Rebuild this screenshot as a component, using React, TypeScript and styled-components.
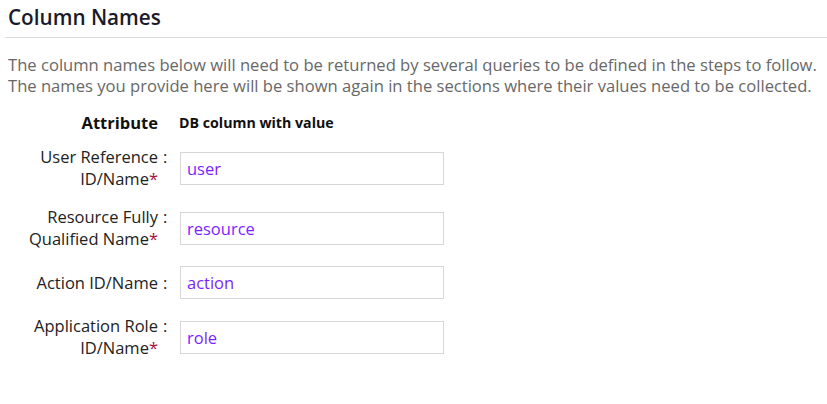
import React from "react";
import styled, { createGlobalStyle, css } from "styled-components";

const GlobalStyle = createGlobalStyle`
  html, body {
    margin: 0;
    padding: 0;
    background: #ffffff;
  }
  body {
    font-family: "Open Sans", "Liberation Sans", Arial, sans-serif;
  }
`;

const Page = styled.div`
  width: 827px;
  padding: 0 0 0 5px;
  box-sizing: border-box;
`;

const SectionTitle = styled.h2`
  margin: 0;
  padding: 3px 0 0 3px;
  height: 38px;
  box-sizing: border-box;
  font-size: 20.7px;
  line-height: 28px;
  font-weight: 600;
  color: #1a1a2a;
  border-bottom: 1px solid #dcdcdc;
`;

const Intro = styled.p`
  margin: 16px 0 0 0;
  padding-left: 3px;
  font-size: 16.6px;
  line-height: 21px;
  color: #686868;
`;

const FieldGrid = styled.div`
  display: grid;
  grid-template-columns: 153px 22px 264px;
  align-items: center;
  row-gap: 16px;
  margin-top: 16px;
`;

const HeaderCell = styled.div<{ $align?: "left" | "right" }>`
  font-weight: 700;
  color: #111;
  text-align: ${(p) => p.$align ?? "left"};
  line-height: 22px;
  margin-bottom: -4px;
`;

const AttrHeader = styled(HeaderCell)`
  grid-column: 1;
  font-size: 16.5px;
`;

const DbHeader = styled(HeaderCell)`
  grid-column: 3;
  font-size: 14.2px;
  margin-left: -1px;
`;

const LabelCell = styled.label`
  grid-column: 1 / span 2;
  display: grid;
  grid-template-columns: 153px 22px;
  align-items: start;
  font-size: 16.5px;
  line-height: 22px;
  color: #222;
`;

/* required fields get a red asterisk after their name */
const LabelText = styled.span<{ $required?: boolean }>`
  text-align: right;
  ${(p) =>
    p.$required &&
    css`
      &::after {
        content: "*";
        color: #a3123a;
      }
    `}
`;

const Colon = styled.span`
  padding-left: 5px;
`;

const TextField = styled.input`
  grid-column: 3;
  width: 264px;
  height: 33px;
  box-sizing: border-box;
  border: 1px solid #d6d6d6;
  padding: 0 6px;
  font-family: "Open Sans", "Liberation Sans", Arial, sans-serif;
  font-size: 16.5px;
  color: #7b1fff;
  background: #fff;
  outline: none;
`;

type Field = { label: string; required: boolean; value: string };

const fields: Field[] = [
  { label: "User Reference ID/Name", required: true, value: "user" },
  { label: "Resource Fully Qualified Name", required: true, value: "resource" },
  { label: "Action ID/Name", required: false, value: "action" },
  { label: "Application Role ID/Name", required: true, value: "role" },
];

export default function App() {
  return (
    <>
      <GlobalStyle />
      <Page>
        <SectionTitle>Column Names</SectionTitle>
        <Intro>
          The column names below will need to be returned by several queries to be defined in the steps to follow.
          <br />
          The names you provide here will be shown again in the sections where their values need to be collected.
        </Intro>
        <FieldGrid>
          <AttrHeader $align="right">Attribute</AttrHeader>
          <DbHeader>DB column with value</DbHeader>
          {fields.map((f) => (
            <LabelRow key={f.value} field={f} />
          ))}
        </FieldGrid>
      </Page>
    </>
  );
}

function LabelRow({ field }: { field: Field }) {
  return (
    <>
      <LabelCell>
        <LabelText $required={field.required}>{field.label}</LabelText>
        <Colon>:</Colon>
      </LabelCell>
      <TextField defaultValue={field.value} />
    </>
  );
}
